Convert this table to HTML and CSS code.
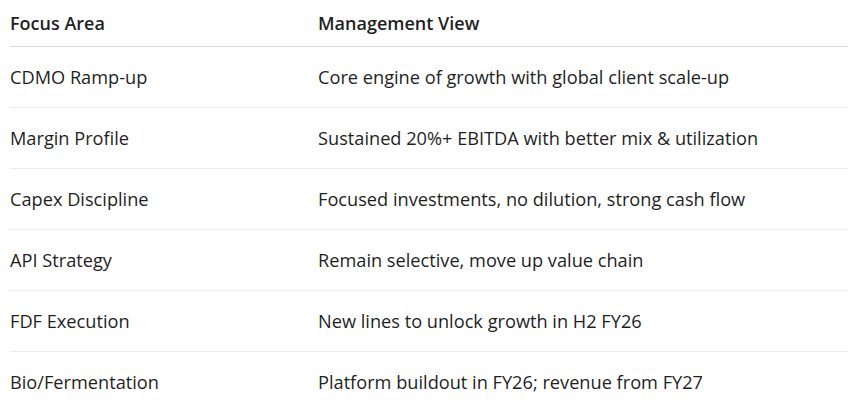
FILE: index.html
```html
<!DOCTYPE html>
<html>
<head>
<meta charset="utf-8">
<link rel="stylesheet" href="styles.css">
</head>
<body>
<div class="wrap">
  <table class="tbl">
    <thead>
      <tr><th class="c1">Focus Area</th><th>Management View</th></tr>
    </thead>
    <tbody>
      <tr><td class="c1">CDMO Ramp-up</td><td>Core engine of growth with global client scale-up</td></tr>
      <tr><td class="c1">Margin Profile</td><td>Sustained 20%+ EBITDA with better mix &amp; utilization</td></tr>
      <tr><td class="c1">Capex Discipline</td><td>Focused investments, no dilution, strong cash flow</td></tr>
      <tr><td class="c1">API Strategy</td><td>Remain selective, move up value chain</td></tr>
      <tr><td class="c1">FDF Execution</td><td>New lines to unlock growth in H2 FY26</td></tr>
      <tr><td class="c1">Bio/Fermentation</td><td>Platform buildout in FY26; revenue from FY27</td></tr>
    </tbody>
  </table>
</div>
</body>
</html>
```
FILE: styles.css
```css
html, body {
  margin: 0;
  padding: 0;
  background: #ffffff;
}
.wrap {
  padding-left: 10px;
}
.tbl {
  width: 838px;
  border-collapse: collapse;
  font-family: "Open Sans", "Noto Sans", sans-serif;
  font-size: 18px;
  color: #1f1f1f;
}
.tbl th {
  text-align: left;
  font-weight: 600;
  height: 46px;
  padding: 0;
  vertical-align: middle;
  border-bottom: 1px solid #d9d9d9;
}
.tbl td {
  height: 60px;
  padding: 0;
  font-size: 18.2px;
  vertical-align: middle;
  border-bottom: 1px solid #ececec;
}
.tbl .c1 {
  width: 308px;
}
```
